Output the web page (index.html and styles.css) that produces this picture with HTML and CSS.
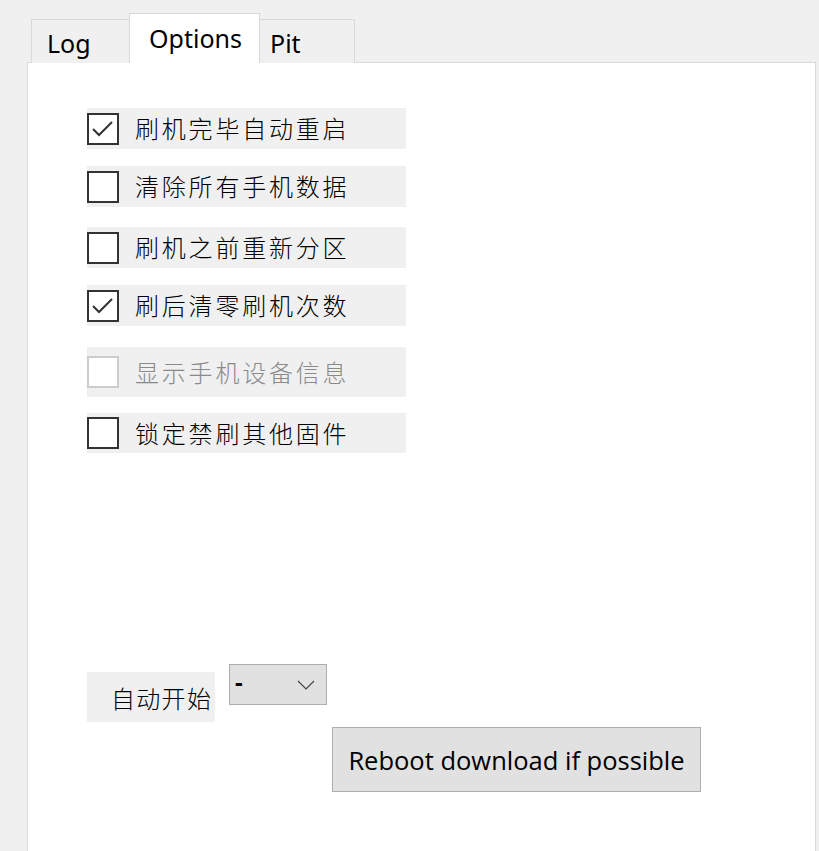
FILE: index.html
```html
<!DOCTYPE html>
<html>
<head>
<meta charset="utf-8">
<link rel="stylesheet" href="styles.css">
</head>
<body>
<div class="window">
  <div class="tabs">
    <div class="tab tab-log">Log</div>
    <div class="tab tab-active">Options</div>
    <div class="tab tab-pit">Pit</div>
  </div>
  <div class="panel">
    <div class="options">
      <label class="row r1"><span class="box"><svg viewBox="0 0 28 28" width="28" height="28"><polyline points="4,14 10,20 23,7" fill="none" stroke="#333" stroke-width="2"/></svg></span><span class="txt">刷机完毕自动重启</span></label>
      <label class="row r2"><span class="box"></span><span class="txt">清除所有手机数据</span></label>
      <label class="row r3"><span class="box"></span><span class="txt">刷机之前重新分区</span></label>
      <label class="row r4"><span class="box"><svg viewBox="0 0 28 28" width="28" height="28"><polyline points="4,14 10,20 23,7" fill="none" stroke="#333" stroke-width="2"/></svg></span><span class="txt">刷后清零刷机次数</span></label>
      <label class="row r5 disabled"><span class="box"></span><span class="txt">显示手机设备信息</span></label>
      <label class="row r6"><span class="box"></span><span class="txt">锁定禁刷其他固件</span></label>
    </div>
    <div class="auto">
      <div class="auto-label">自动开始</div>
      <div class="combo"><span class="combo-val">-</span><svg class="chev" viewBox="0 0 18 10" width="18" height="10"><polyline points="1,1 9,9 17,1" fill="none" stroke="#444" stroke-width="1.2"/></svg></div>
    </div>
    <div class="btn">Reboot download if possible</div>
  </div>
</div>
</body>
</html>
```
FILE: styles.css
```css
html, body {
  margin: 0;
  padding: 0;
  background: #f0f0f0;
  height: 100%;
  overflow: hidden;
}
.window {
  padding-left: 27px;
  padding-top: 13px;
  font-family: "Noto Sans", "Noto Sans CJK SC", sans-serif;
}
.tabs {
  display: flex;
  align-items: flex-end;
  margin-left: 4px;
  height: 50px;
  position: relative;
  z-index: 2;
}
.tab {
  box-sizing: border-box;
  height: 44px;
  border: 1px solid #d9d9d9;
  border-bottom: none;
  background: #f0f0f0;
  font-size: 25px;
  color: #000;
  line-height: 46px;
}
.tab-log {
  width: 98px;
  padding-left: 15px;
  border-right: none;
}
.tab-active {
  width: 131px;
  height: 50px;
  background: #fff;
  padding-left: 19px;
  line-height: 48px;
}
.tab-pit {
  width: 95px;
  padding-left: 10px;
  border-left: none;
}
.panel {
  box-sizing: border-box;
  margin-top: -1px;
  width: 789px;
  height: 800px;
  background: #fff;
  border: 1px solid #d9d9d9;
  padding-left: 59px;
  padding-top: 45px;
}
.options {
  display: flex;
  flex-direction: column;
}
.row {
  display: flex;
  align-items: center;
  width: 319px;
  height: 41px;
  background: #f0f0f0;
  font-family: "Noto Sans CJK SC", sans-serif;
  font-weight: 300;
  font-size: 24px;
  letter-spacing: 2.8px;
  color: #000;
}
.r2 { margin-top: 17px; }
.r3 { margin-top: 20px; }
.r4 { margin-top: 17px; }
.r5 { margin-top: 21px; height: 50px; }
.r6 { margin-top: 16px; height: 40px; }
.box {
  box-sizing: border-box;
  width: 32px;
  height: 32px;
  border: 2px solid #333;
  background: #fff;
  display: flex;
  align-items: center;
  justify-content: center;
  margin-right: 16px;
  flex: none;
}
.txt {
  line-height: 1;
  margin-top: -1px;
}
.disabled .box { border-color: #cccccc; }
.disabled .txt { color: #8a8a8a; }
.auto {
  display: flex;
  align-items: flex-start;
  margin-top: 211px;
}
.auto-label {
  box-sizing: border-box;
  width: 128px;
  height: 50px;
  margin-top: 8px;
  background: #f0f0f0;
  font-family: "Noto Sans CJK SC", sans-serif;
  font-weight: 300;
  font-size: 24px;
  letter-spacing: 1.3px;
  padding-left: 24px;
  line-height: 52px;
}
.combo {
  box-sizing: border-box;
  width: 98px;
  height: 41px;
  margin-left: 14px;
  background: #e1e1e1;
  border: 1px solid #adadad;
  position: relative;
}
.combo-val {
  position: absolute;
  left: 5px;
  top: 2px;
  font-size: 24px;
  line-height: 30px;
  font-weight: bold;
}
.chev {
  position: absolute;
  left: 67px;
  top: 15px;
}
.btn {
  box-sizing: border-box;
  margin-left: 245px;
  margin-top: 5px;
  width: 369px;
  height: 65px;
  background: #e1e1e1;
  border: 1px solid #adadad;
  display: flex;
  align-items: center;
  justify-content: center;
  font-family: "Open Sans", sans-serif;
  font-size: 25.5px;
  color: #000;
}
```
